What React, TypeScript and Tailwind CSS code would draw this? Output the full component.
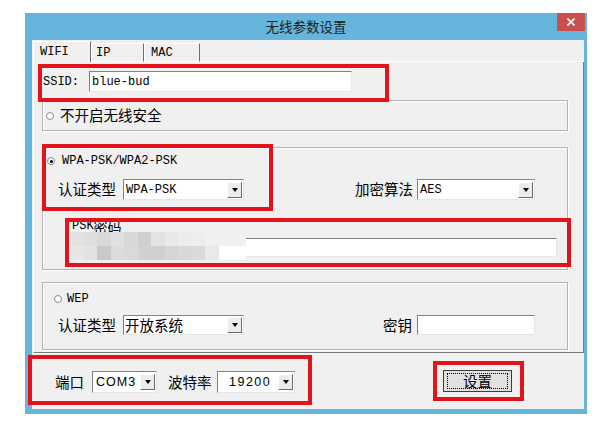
import clsx from "clsx";
import { ReactNode } from "react";

const cjk = "[font-family:'Noto_Sans_CJK_SC',sans-serif]";
const mono = "[font-family:'Liberation_Mono','Noto_Sans_CJK_SC',monospace]";
const sans = "[font-family:'Liberation_Sans',sans-serif]";

const groupBox =
  "w-[526px] border border-[#b4b4b4] shadow-[inset_1px_1px_0_#ffffff,1px_1px_0_#ffffff]";

// pixelated blur that hides the key
const blurCells = [
  "bg-[#e2e2e2]", "bg-[#dedede]", "bg-[#d9d9d9]", "bg-[#e0e0e0]", "bg-[#d8d8d8]", "bg-[#cfcfcf]", "bg-[#e3e3e3]",
  "bg-[#e8e8e8]", "bg-[#ececec]", "bg-[#eeeeee]", "bg-[#f0f0f0]", "bg-[#f0f0f0]", "bg-[#f0f0f0]",
  "bg-[#e6e6e6]", "bg-[#e2e2e2]", "bg-[#c9c9c9]", "bg-[#dcdcdc]", "bg-[#d9d9d9]", "bg-[#d1d1d1]", "bg-[#d0d0d0]",
  "bg-[#d5d5d5]", "bg-[#d8d8d8]", "bg-[#dadada]", "bg-[#e9e9e9]", "bg-[#ffffff]", "bg-[#ffffff]",
];

const Arrow = () => (
  <span className="h-0 w-0 border-x-[3.5px] border-t-[4px] border-x-transparent border-t-black" />
);

const Radio = ({ checked }: { checked?: boolean }) => (
  <span className="flex h-[8px] w-[8px] shrink-0 items-center justify-center rounded-full border border-[#8a8a8a] bg-white">
    {checked && <span className="h-[3px] w-[3px] rounded-full bg-black" />}
  </span>
);

type ComboProps = {
  className: string;
  textClass?: string;
  children: ReactNode;
};

const Combo = ({ className, textClass, children }: ComboProps) => (
  <div
    className={clsx(
      "flex shrink-0 items-center border border-[#828282] border-r-[#e6e6e6] border-b-[#e6e6e6] bg-white",
      className
    )}
  >
    <div className={clsx("flex-1 whitespace-nowrap leading-[16px] text-black", textClass)}>{children}</div>
    <div className="mr-[1px] flex h-[16px] w-[15px] items-center justify-center border border-white border-r-[#6a6a6a] border-b-[#6a6a6a] bg-[#ececec]">
      <Arrow />
    </div>
  </div>
);

const Field = ({ className, children }: { className: string; children?: ReactNode }) => (
  <div
    className={clsx(
      "flex shrink-0 items-center border border-[#828282] border-r-[#e6e6e6] border-b-[#e6e6e6] bg-white",
      className
    )}
  >
    {children}
  </div>
);

const RedBox = ({ className }: { className: string }) => (
  <div className={clsx("pointer-events-none absolute border-[4px] border-[#e3131b]", className)} />
);

export default function App() {
  return (
    <div className="relative h-[444px] w-[599px] overflow-hidden bg-white pl-[25px] pt-[13px] text-black">
      {/* Window */}
      <div className="flex h-[401px] w-[562px] flex-col bg-[#66b5dc]">
        {/* Title bar */}
        <div className={clsx("relative flex h-[27px] shrink-0 items-center justify-center text-[13.5px] leading-none text-[#1e1e1e]", cjk)}>
          无线参数设置
          <div className="absolute right-[2px] top-0 flex h-[18px] w-[28px] items-center justify-center bg-[#c9504e]">
            <svg width="8" height="8" viewBox="0 0 8 8">
              <path d="M0.5 0.5L7.5 7.5M7.5 0.5L0.5 7.5" stroke="#ffffff" strokeWidth="1.6" />
            </svg>
          </div>
        </div>

        {/* Client area */}
        <div className="ml-[7px] flex h-[369px] w-[552px] flex-col bg-[#f0f0f0]">
          {/* Tabs */}
          <div className={clsx("flex h-[22px] items-end pl-[1px] text-[12px] leading-none", mono)}>
            <div className="flex h-[21px] w-[58px] items-center border-l border-t border-r border-white border-r-[#6e6e6e] pl-[6px]">
              WIFI
            </div>
            <div className="flex h-[19px] w-[53px] items-center border border-white border-r-[#6e6e6e] pl-[4px]">
              IP
            </div>
            <div className="flex h-[19px] w-[56px] items-center border border-white border-r-[#6e6e6e] pl-[6px]">
              MAC
            </div>
            <div className="h-px flex-1 bg-white" />
          </div>

          {/* Tab page */}
          <div className="ml-[1px] h-[291px] w-[551px] border-l border-r border-b border-l-white border-r-[#7a7a7a] border-b-[#7a7a7a] pl-[8px]">
            {/* SSID */}
            <div className={clsx("mt-[9px] flex h-[21px] items-center text-[12px]", mono)}>
              <span className="w-[47px] pl-[1px]">SSID:</span>
              <Field className="h-[21px] w-[263px] pl-[2px]">blue-bud</Field>
            </div>

            {/* No security */}
            <div className={clsx(groupBox, "mt-[8px] flex h-[31px] items-center gap-[6px] pl-[3px]")}>
              <Radio />
              <span className={clsx("text-[14.5px] leading-none", cjk)}>不开启无线安全</span>
            </div>

            {/* WPA */}
            <div className={clsx(groupBox, "relative mt-[16px] h-[123px]")}>
              <div className={clsx("mt-[5px] flex h-[16px] items-center gap-[7px] pl-[4px] text-[12px]", mono)}>
                <Radio checked />
                <span>WPA-PSK/WPA2-PSK</span>
              </div>
              <div className="mt-[10px] flex h-[21px] items-center pl-[15px]">
                <span className={clsx("w-[65px] text-[14.5px] leading-none", cjk)}>认证类型</span>
                <Combo className="h-[21px] w-[121px]" textClass={clsx("pl-[2px] text-[12px]", mono)}>
                  WPA-PSK
                </Combo>
                <span className={clsx("ml-[111px] w-[62px] text-[14.5px] leading-none", cjk)}>加密算法</span>
                <Combo className="h-[21px] w-[118px]" textClass={clsx("pl-[2px] text-[12px]", mono)}>
                  AES
                </Combo>
              </div>
              <div className="mt-[18px] flex h-[16px] items-center pl-[29px] leading-none">
                <span className={clsx("text-[12px]", mono)}>PSK</span>
                <span className={clsx("text-[14px]", cjk)}>密码</span>
              </div>
              <Field className="ml-[27px] mt-[4px] h-[19px] w-[487px]" />
              <div className="absolute left-[27px] top-[84px] grid grid-cols-[repeat(13,13.5px)] grid-rows-[14px_14px]">
                {blurCells.map((c, i) => (
                  <div key={i} className={c} />
                ))}
              </div>
            </div>

            {/* WEP */}
            <div className={clsx(groupBox, "mt-[12px] h-[68px]")}>
              <div className={clsx("mt-[8px] flex h-[16px] items-center gap-[5px] pl-[11px] text-[12px]", mono)}>
                <Radio />
                <span>WEP</span>
              </div>
              <div className="mt-[8px] flex h-[20px] items-center pl-[15px]">
                <span className={clsx("w-[65px] text-[14.5px] leading-none", cjk)}>认证类型</span>
                <Combo className="h-[20px] w-[121px]" textClass={clsx("pl-[1px] text-[14.5px]", cjk)}>
                  开放系统
                </Combo>
                <span className={clsx("ml-[139px] w-[34px] text-[14.5px] leading-none", cjk)}>密钥</span>
                <Field className="h-[20px] w-[118px]" />
              </div>
            </div>
          </div>

          {/* Port / baud rate / set */}
          <div className="flex h-[56px] items-start pl-[23px] pt-[18px]">
            <span className={clsx("flex h-[22px] w-[37px] items-center text-[14.5px] leading-none", cjk)}>端口</span>
            <Combo className="h-[22px] w-[65px]" textClass={clsx("pl-[3px] text-[12.5px] tracking-[1px] text-[#333]", sans)}>
              COM3
            </Combo>
            <span className={clsx("ml-[11px] flex h-[22px] w-[49px] items-center text-[14.5px] leading-none", cjk)}>
              波特率
            </span>
            <Combo className="h-[22px] w-[78px]" textClass={clsx("pl-[11px] text-[12.5px] tracking-[1.5px] text-[#333]", sans)}>
              19200
            </Combo>
            <div className="-mt-px ml-[148px] flex h-[22px] w-[69px] items-center justify-center border border-[#3c3c3c] bg-[#e1e1e1]">
              <div className={clsx("flex h-[16px] w-[61px] items-center justify-center border border-dotted border-black text-[14.5px] leading-none", cjk)}>
                设置
              </div>
            </div>
          </div>
        </div>
      </div>

      {/* Annotation boxes */}
      <RedBox className="left-[38px] top-[64px] h-[38px] w-[351px]" />
      <RedBox className="left-[42px] top-[144px] h-[67px] w-[231px]" />
      <RedBox className="left-[65px] top-[218px] h-[49px] w-[506px]" />
      <RedBox className="left-[28px] top-[355px] h-[50px] w-[284px]" />
      <RedBox className="left-[433px] top-[361px] h-[40px] w-[91px]" />
    </div>
  );
}
